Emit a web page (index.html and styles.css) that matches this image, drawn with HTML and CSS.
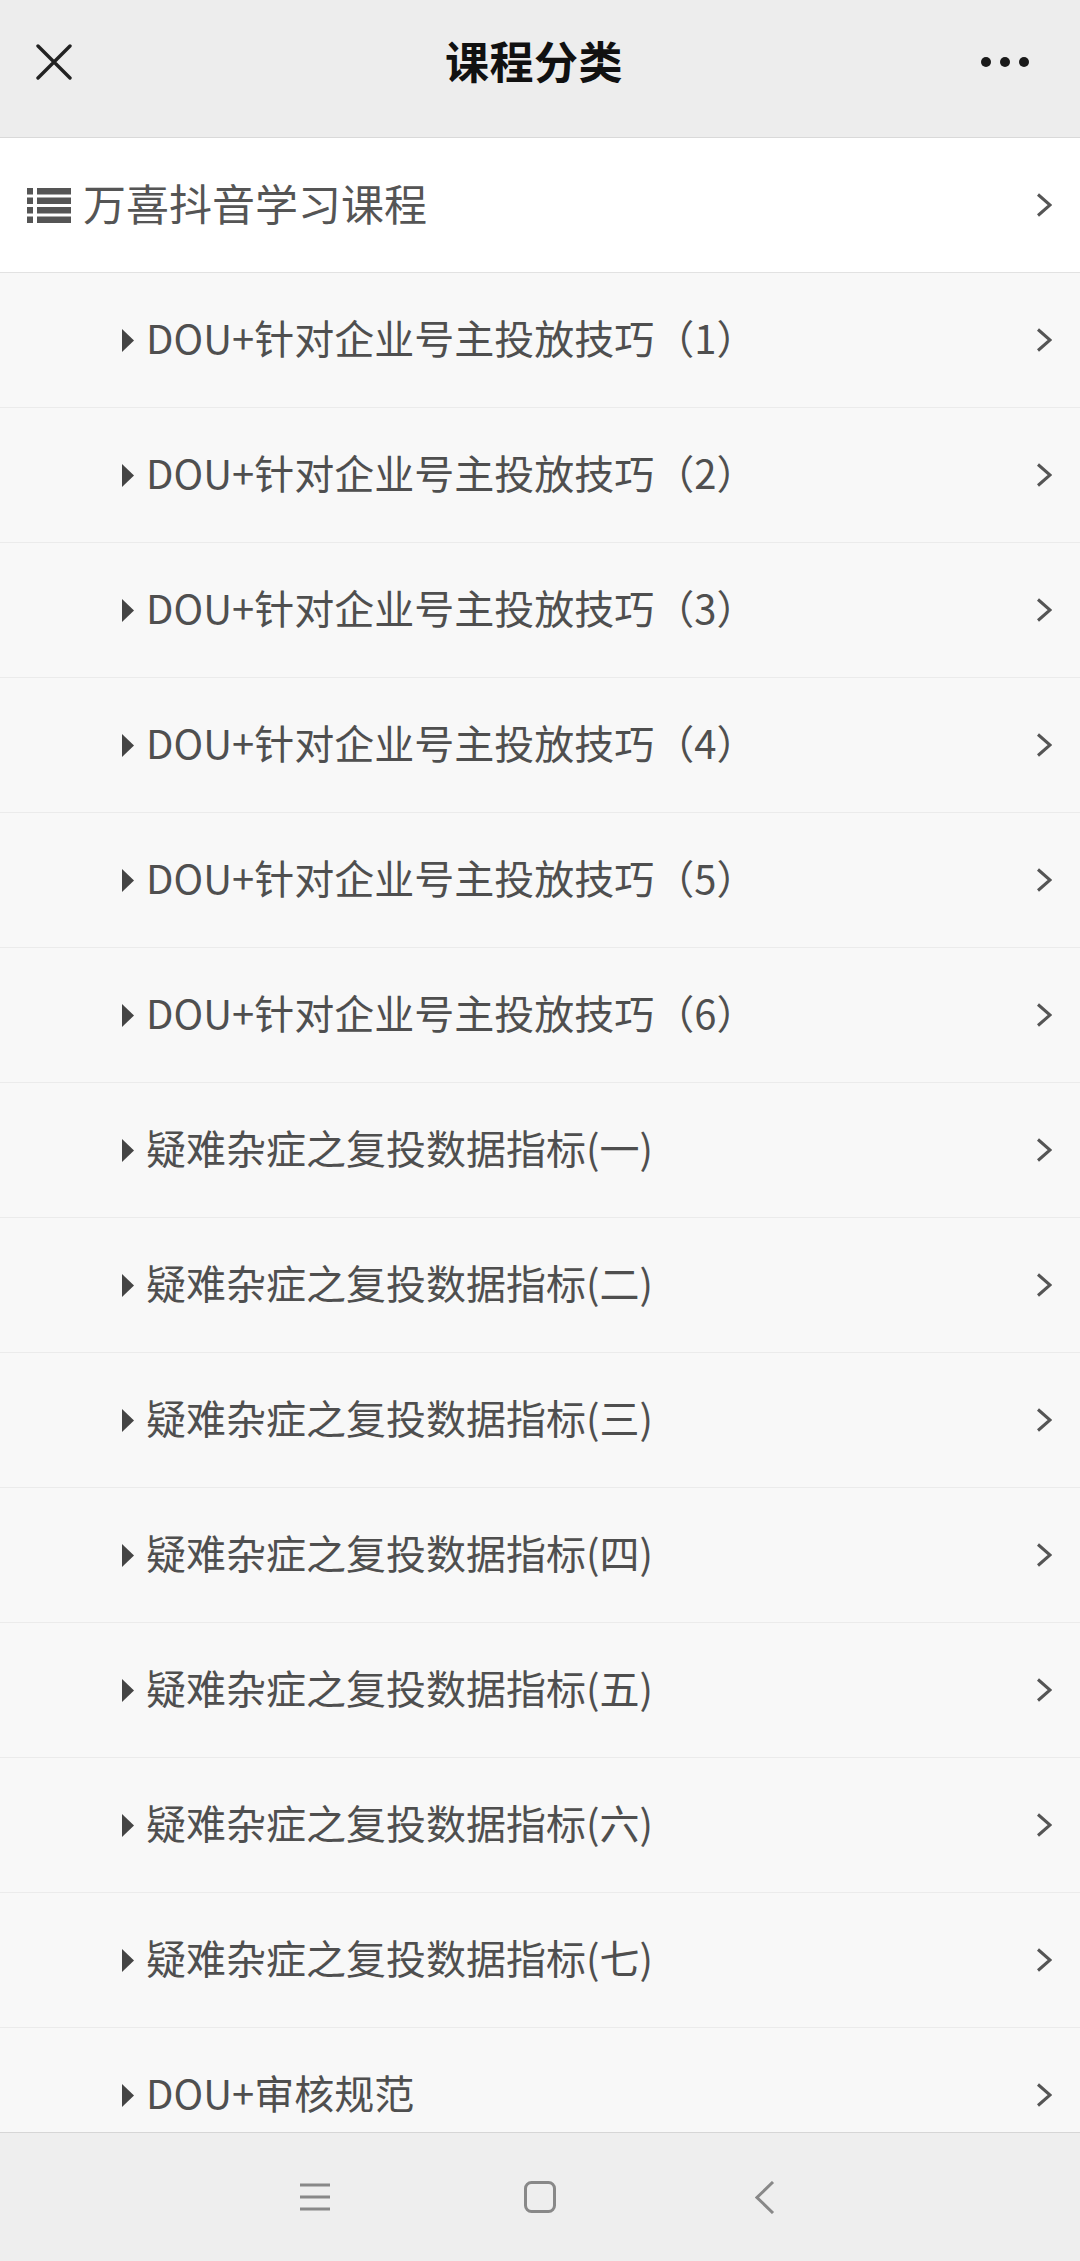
FILE: index.html
```html
<!DOCTYPE html>
<html lang="zh-CN">
<head>
  <meta charset="UTF-8" />
  <meta name="viewport" content="width=device-width, initial-scale=1.0"/>
  <title>课程分类</title>
  <link rel="stylesheet" href="styles.css">
</head>
<body>

<div class="app">
  <!-- Top bar -->
  <header class="topbar">
    <div class="topbar-left">
      <svg class="icon-close" width="36" height="36" viewBox="0 0 36 36">
        <path d="M2 2 L34 34 M34 2 L2 34" stroke="#222" stroke-width="3.4" stroke-linecap="round" fill="none"/>
      </svg>
    </div>
    <h1 class="title">课程分类</h1>
    <div class="topbar-right">
      <span class="dot"></span><span class="dot"></span><span class="dot"></span>
    </div>
  </header>

  <!-- Course list -->
  <div class="list">
    <div class="cat-row">
      <svg class="icon-list" width="44" height="35" viewBox="0 0 44 35">
        <rect x="0" y="0" width="6" height="6.5" fill="#555"/>
        <rect x="10" y="0" width="34" height="6.5" fill="#555"/>
        <rect x="0" y="9.5" width="6" height="6.5" fill="#555"/>
        <rect x="10" y="9.5" width="34" height="6.5" fill="#555"/>
        <rect x="0" y="19" width="6" height="6.5" fill="#555"/>
        <rect x="10" y="19" width="34" height="6.5" fill="#555"/>
        <rect x="0" y="28.5" width="6" height="6.5" fill="#555"/>
        <rect x="10" y="28.5" width="34" height="6.5" fill="#555"/>
      </svg>
      <span class="cat-name">万喜抖音学习课程</span>
      <svg class="chevron" width="16" height="24" viewBox="0 0 16 24">
        <path d="M2 1.5 L14 12 L2 22.5" stroke="#555" stroke-width="3" fill="none"/>
      </svg>
    </div>

    <div class="sub-row">
      <svg class="caret" width="12" height="23" viewBox="0 0 12 23"><polygon points="0,0 12,11.5 0,23" fill="#444"/></svg>
      <span class="sub-name">DOU+针对企业号主投放技巧（1）</span>
      <svg class="chevron" width="16" height="24" viewBox="0 0 16 24"><path d="M2 1.5 L14 12 L2 22.5" stroke="#555" stroke-width="3" fill="none"/></svg>
    </div>
    <div class="sub-row">
      <svg class="caret" width="12" height="23" viewBox="0 0 12 23"><polygon points="0,0 12,11.5 0,23" fill="#444"/></svg>
      <span class="sub-name">DOU+针对企业号主投放技巧（2）</span>
      <svg class="chevron" width="16" height="24" viewBox="0 0 16 24"><path d="M2 1.5 L14 12 L2 22.5" stroke="#555" stroke-width="3" fill="none"/></svg>
    </div>
    <div class="sub-row">
      <svg class="caret" width="12" height="23" viewBox="0 0 12 23"><polygon points="0,0 12,11.5 0,23" fill="#444"/></svg>
      <span class="sub-name">DOU+针对企业号主投放技巧（3）</span>
      <svg class="chevron" width="16" height="24" viewBox="0 0 16 24"><path d="M2 1.5 L14 12 L2 22.5" stroke="#555" stroke-width="3" fill="none"/></svg>
    </div>
    <div class="sub-row">
      <svg class="caret" width="12" height="23" viewBox="0 0 12 23"><polygon points="0,0 12,11.5 0,23" fill="#444"/></svg>
      <span class="sub-name">DOU+针对企业号主投放技巧（4）</span>
      <svg class="chevron" width="16" height="24" viewBox="0 0 16 24"><path d="M2 1.5 L14 12 L2 22.5" stroke="#555" stroke-width="3" fill="none"/></svg>
    </div>
    <div class="sub-row">
      <svg class="caret" width="12" height="23" viewBox="0 0 12 23"><polygon points="0,0 12,11.5 0,23" fill="#444"/></svg>
      <span class="sub-name">DOU+针对企业号主投放技巧（5）</span>
      <svg class="chevron" width="16" height="24" viewBox="0 0 16 24"><path d="M2 1.5 L14 12 L2 22.5" stroke="#555" stroke-width="3" fill="none"/></svg>
    </div>
    <div class="sub-row">
      <svg class="caret" width="12" height="23" viewBox="0 0 12 23"><polygon points="0,0 12,11.5 0,23" fill="#444"/></svg>
      <span class="sub-name">DOU+针对企业号主投放技巧（6）</span>
      <svg class="chevron" width="16" height="24" viewBox="0 0 16 24"><path d="M2 1.5 L14 12 L2 22.5" stroke="#555" stroke-width="3" fill="none"/></svg>
    </div>
    <div class="sub-row">
      <svg class="caret" width="12" height="23" viewBox="0 0 12 23"><polygon points="0,0 12,11.5 0,23" fill="#444"/></svg>
      <span class="sub-name">疑难杂症之复投数据指标(一)</span>
      <svg class="chevron" width="16" height="24" viewBox="0 0 16 24"><path d="M2 1.5 L14 12 L2 22.5" stroke="#555" stroke-width="3" fill="none"/></svg>
    </div>
    <div class="sub-row">
      <svg class="caret" width="12" height="23" viewBox="0 0 12 23"><polygon points="0,0 12,11.5 0,23" fill="#444"/></svg>
      <span class="sub-name">疑难杂症之复投数据指标(二)</span>
      <svg class="chevron" width="16" height="24" viewBox="0 0 16 24"><path d="M2 1.5 L14 12 L2 22.5" stroke="#555" stroke-width="3" fill="none"/></svg>
    </div>
    <div class="sub-row">
      <svg class="caret" width="12" height="23" viewBox="0 0 12 23"><polygon points="0,0 12,11.5 0,23" fill="#444"/></svg>
      <span class="sub-name">疑难杂症之复投数据指标(三)</span>
      <svg class="chevron" width="16" height="24" viewBox="0 0 16 24"><path d="M2 1.5 L14 12 L2 22.5" stroke="#555" stroke-width="3" fill="none"/></svg>
    </div>
    <div class="sub-row">
      <svg class="caret" width="12" height="23" viewBox="0 0 12 23"><polygon points="0,0 12,11.5 0,23" fill="#444"/></svg>
      <span class="sub-name">疑难杂症之复投数据指标(四)</span>
      <svg class="chevron" width="16" height="24" viewBox="0 0 16 24"><path d="M2 1.5 L14 12 L2 22.5" stroke="#555" stroke-width="3" fill="none"/></svg>
    </div>
    <div class="sub-row">
      <svg class="caret" width="12" height="23" viewBox="0 0 12 23"><polygon points="0,0 12,11.5 0,23" fill="#444"/></svg>
      <span class="sub-name">疑难杂症之复投数据指标(五)</span>
      <svg class="chevron" width="16" height="24" viewBox="0 0 16 24"><path d="M2 1.5 L14 12 L2 22.5" stroke="#555" stroke-width="3" fill="none"/></svg>
    </div>
    <div class="sub-row">
      <svg class="caret" width="12" height="23" viewBox="0 0 12 23"><polygon points="0,0 12,11.5 0,23" fill="#444"/></svg>
      <span class="sub-name">疑难杂症之复投数据指标(六)</span>
      <svg class="chevron" width="16" height="24" viewBox="0 0 16 24"><path d="M2 1.5 L14 12 L2 22.5" stroke="#555" stroke-width="3" fill="none"/></svg>
    </div>
    <div class="sub-row">
      <svg class="caret" width="12" height="23" viewBox="0 0 12 23"><polygon points="0,0 12,11.5 0,23" fill="#444"/></svg>
      <span class="sub-name">疑难杂症之复投数据指标(七)</span>
      <svg class="chevron" width="16" height="24" viewBox="0 0 16 24"><path d="M2 1.5 L14 12 L2 22.5" stroke="#555" stroke-width="3" fill="none"/></svg>
    </div>
    <div class="sub-row last">
      <svg class="caret" width="12" height="23" viewBox="0 0 12 23"><polygon points="0,0 12,11.5 0,23" fill="#444"/></svg>
      <span class="sub-name">DOU+审核规范</span>
      <svg class="chevron" width="16" height="24" viewBox="0 0 16 24"><path d="M2 1.5 L14 12 L2 22.5" stroke="#555" stroke-width="3" fill="none"/></svg>
    </div>
  </div>

  <!-- System nav bar -->
  <footer class="navbar">
    <div class="nav-btn">
      <svg width="30" height="28" viewBox="0 0 30 28">
        <path d="M0 2 H30 M0 14 H30 M0 26 H30" stroke="#888" stroke-width="3" fill="none"/>
      </svg>
    </div>
    <div class="nav-btn">
      <svg width="32" height="32" viewBox="0 0 32 32">
        <rect x="1.5" y="1.5" width="29" height="29" rx="6" stroke="#888" stroke-width="3" fill="none"/>
      </svg>
    </div>
    <div class="nav-btn">
      <svg width="20" height="33" viewBox="0 0 20 33">
        <path d="M18 1 L2 16.5 L18 32" stroke="#888" stroke-width="3" fill="none"/>
      </svg>
    </div>
  </footer>
</div>

</body>
</html>
```

FILE: styles.css
```css
* {
  box-sizing: border-box;
}

body {
  margin: 0;
  padding: 0;
  font-family: "Noto Sans CJK SC", "Noto Sans", sans-serif;
  background: #f8f8f8;
}

.app {
  width: 1080px;
  height: 2261px;
  display: flex;
  flex-direction: column;
  overflow: hidden;
}

/* top bar */
.topbar {
  flex: 0 0 138px;
  display: grid;
  grid-template-columns: 1fr auto 1fr;
  align-items: center;
  padding-bottom: 13px;
  background: #ededed;
  border-bottom: 1px solid #d9d9d9;
}

.topbar-left {
  padding-left: 36px;
  display: flex;
  align-items: center;
}

.title {
  margin: 0 12px 4px 0;
  font-size: 44px;
  font-weight: bold;
  color: #111;
  letter-spacing: 0.5px;
}

.topbar-right {
  display: flex;
  justify-content: flex-end;
  gap: 9px;
  padding-right: 51px;
}

.dot {
  width: 10px;
  height: 10px;
  border-radius: 50%;
  background: #1a1a1a;
}

/* list */
.list {
  flex: 1;
  overflow: hidden;
}

.cat-row {
  height: 135px;
  display: flex;
  align-items: center;
  padding: 0 28px 0 27px;
  background: #fff;
  border-bottom: 1px solid #e2e2e2;
}

.icon-list {
  flex: none;
  margin-right: 12px;
}

.cat-name {
  flex: 1;
  font-size: 43px;
  color: #555;
  margin-bottom: 6px;
}

.chevron {
  flex: none;
}

.sub-row {
  height: 135px;
  display: flex;
  align-items: center;
  padding: 0 28px 0 122px;
  background: #f8f8f8;
  border-bottom: 1px solid #ebebeb;
}

.caret {
  flex: none;
  margin-right: 12px;
}

.sub-name {
  flex: 1;
  font-size: 40px;
  color: #4f4f4f;
  margin-bottom: 6px;
}

/* system nav bar */
.navbar {
  flex: 0 0 129px;
  display: flex;
  justify-content: center;
  align-items: center;
  gap: 165px;
  background: #eeeeee;
  border-top: 1px solid #d6d6d6;
}

.nav-btn {
  width: 60px;
  display: flex;
  justify-content: center;
  align-items: center;
}
```
